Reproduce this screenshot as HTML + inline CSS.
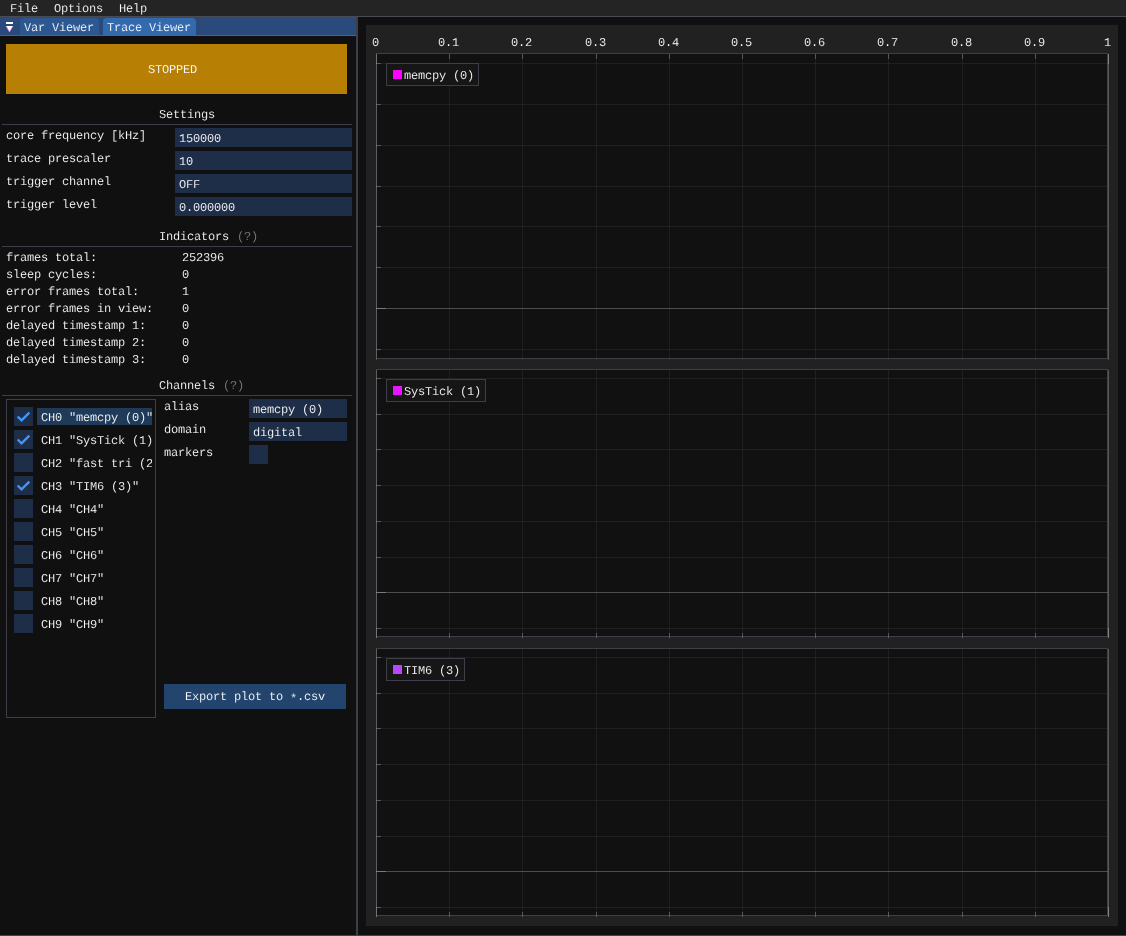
<!DOCTYPE html>
<html><head><meta charset="utf-8"><title>Trace Viewer</title><style>
html,body{margin:0;padding:0;background:#101010;}
body{width:1126px;height:936px;position:relative;overflow:hidden;font-family:"Liberation Mono",monospace;}
#w{position:absolute;left:0;top:0;width:1126px;height:936px;overflow:hidden;will-change:transform;}
.r{position:absolute;}
.t{position:absolute;font-family:"Liberation Mono",monospace;font-size:12px;line-height:13px;letter-spacing:-0.201px;color:#fff;white-space:pre;text-rendering:geometricPrecision;-webkit-text-stroke:0.12px #101010;}
.g{color:#808080;}
</style></head><body>
<div id="w">
<div class="r" style="left:0px;top:0px;width:1126px;height:16px;background:#242424;"></div>
<div class="r" style="left:0px;top:16px;width:1126px;height:1px;background:#4a4a53;"></div>
<div class="t" style="left:10px;top:3px;-webkit-text-stroke-color:#242424;">File</div>
<div class="t" style="left:54px;top:3px;-webkit-text-stroke-color:#242424;">Options</div>
<div class="t" style="left:119px;top:3px;-webkit-text-stroke-color:#242424;">Help</div>
<div class="r" style="left:0px;top:17px;width:356px;height:19px;background:#294a7a;"></div>
<div class="r" style="left:20px;top:18px;width:79px;height:17px;background:#2d5790;border-radius:4px 4px 0 0;"></div>
<div class="r" style="left:103px;top:18px;width:93px;height:17px;background:#3369ad;border-radius:4px 4px 0 0;"></div>
<div class="r" style="left:0px;top:35px;width:356px;height:1px;background:#3369ad;"></div>
<svg class="r" style="left:0;top:17px" width="20" height="18" viewBox="0 17 20 18"><rect x="6" y="22" width="7" height="2" fill="#fff"/><polygon points="5.9,26 13.1,26 9.5,32.2" fill="#fff"/><path d="M6.3 26.6 L9.5 32 L12.7 26.6" fill="none" stroke="#c264e6" stroke-width="0.8" stroke-opacity="0.75"/></svg>
<div class="t" style="left:24px;top:22px;-webkit-text-stroke-color:#2d5790;">Var Viewer</div>
<div class="t" style="left:107px;top:22px;-webkit-text-stroke-color:#3369ad;">Trace Viewer</div>
<div class="r" style="left:356px;top:17px;width:2px;height:918px;background:#3e3e48;"></div>
<div class="r" style="left:0px;top:935px;width:1126px;height:1px;background:#444444;"></div>
<div class="r" style="left:6px;top:44px;width:341px;height:50px;background:#b87f05;"></div>
<div class="t" style="left:148px;top:64px;-webkit-text-stroke-color:#b87f05;">STOPPED</div>
<div class="t" style="left:159px;top:109px;">Settings</div>
<div class="r" style="left:2px;top:124px;width:350px;height:1px;background:#3e3e48;"></div>
<div class="t" style="left:6px;top:130px;">core frequency [kHz]</div>
<div class="r" style="left:175px;top:128px;width:177px;height:19px;background:#1f2e48;"></div>
<div class="t" style="left:179px;top:133px;-webkit-text-stroke-color:#1f2e48;">150000</div>
<div class="t" style="left:6px;top:153px;">trace prescaler</div>
<div class="r" style="left:175px;top:151px;width:177px;height:19px;background:#1f2e48;"></div>
<div class="t" style="left:179px;top:156px;-webkit-text-stroke-color:#1f2e48;">10</div>
<div class="t" style="left:6px;top:176px;">trigger channel</div>
<div class="r" style="left:175px;top:174px;width:177px;height:19px;background:#1f2e48;"></div>
<div class="t" style="left:179px;top:179px;-webkit-text-stroke-color:#1f2e48;">OFF</div>
<div class="t" style="left:6px;top:199px;">trigger level</div>
<div class="r" style="left:175px;top:197px;width:177px;height:19px;background:#1f2e48;"></div>
<div class="t" style="left:179px;top:202px;-webkit-text-stroke-color:#1f2e48;">0.000000</div>
<div class="t" style="left:159px;top:231px;">Indicators</div>
<div class="t g" style="left:237px;top:231px;">(?)</div>
<div class="r" style="left:2px;top:246px;width:350px;height:1px;background:#3e3e48;"></div>
<div class="t" style="left:6px;top:252px;">frames total:</div>
<div class="t" style="left:182px;top:252px;">252396</div>
<div class="t" style="left:6px;top:269px;">sleep cycles:</div>
<div class="t" style="left:182px;top:269px;">0</div>
<div class="t" style="left:6px;top:286px;">error frames total:</div>
<div class="t" style="left:182px;top:286px;">1</div>
<div class="t" style="left:6px;top:303px;">error frames in view:</div>
<div class="t" style="left:182px;top:303px;">0</div>
<div class="t" style="left:6px;top:320px;">delayed timestamp 1:</div>
<div class="t" style="left:182px;top:320px;">0</div>
<div class="t" style="left:6px;top:337px;">delayed timestamp 2:</div>
<div class="t" style="left:182px;top:337px;">0</div>
<div class="t" style="left:6px;top:354px;">delayed timestamp 3:</div>
<div class="t" style="left:182px;top:354px;">0</div>
<div class="t" style="left:159px;top:380px;">Channels</div>
<div class="t g" style="left:223px;top:380px;">(?)</div>
<div class="r" style="left:2px;top:395px;width:350px;height:1px;background:#3e3e48;"></div>
<div class="r" style="left:6px;top:399px;width:148px;height:317px;border:1px solid #3e3e48"></div>
<div class="r" style="left:37px;top:408px;width:115px;height:17px;background:#203a5a;"></div>
<div class="r" style="left:0;top:0;width:152px;height:936px;overflow:hidden">
<div class="t" style="left:41px;top:412px;-webkit-text-stroke-color:#203a5a;">CH0 "memcpy (0)"</div>
<div class="t" style="left:41px;top:435px;">CH1 "SysTick (1)"</div>
<div class="t" style="left:41px;top:458px;">CH2 "fast tri (2)"</div>
<div class="t" style="left:41px;top:481px;">CH3 "TIM6 (3)"</div>
<div class="t" style="left:41px;top:504px;">CH4 "CH4"</div>
<div class="t" style="left:41px;top:527px;">CH5 "CH5"</div>
<div class="t" style="left:41px;top:550px;">CH6 "CH6"</div>
<div class="t" style="left:41px;top:573px;">CH7 "CH7"</div>
<div class="t" style="left:41px;top:596px;">CH8 "CH8"</div>
<div class="t" style="left:41px;top:619px;">CH9 "CH9"</div>
</div>
<div class="r" style="left:14px;top:407px;width:19px;height:19px;background:#1f2e48;"></div>
<svg class="r" style="left:14px;top:407px" width="19" height="19" viewBox="0 0 19 19"><path d="M3.65 9.5 L7.55 13.4 L15.35 5.6" fill="none" stroke="#4296fa" stroke-width="2.35"/></svg>
<div class="r" style="left:14px;top:430px;width:19px;height:19px;background:#1f2e48;"></div>
<svg class="r" style="left:14px;top:430px" width="19" height="19" viewBox="0 0 19 19"><path d="M3.65 9.5 L7.55 13.4 L15.35 5.6" fill="none" stroke="#4296fa" stroke-width="2.35"/></svg>
<div class="r" style="left:14px;top:453px;width:19px;height:19px;background:#1f2e48;"></div>
<div class="r" style="left:14px;top:476px;width:19px;height:19px;background:#1f2e48;"></div>
<svg class="r" style="left:14px;top:476px" width="19" height="19" viewBox="0 0 19 19"><path d="M3.65 9.5 L7.55 13.4 L15.35 5.6" fill="none" stroke="#4296fa" stroke-width="2.35"/></svg>
<div class="r" style="left:14px;top:499px;width:19px;height:19px;background:#1f2e48;"></div>
<div class="r" style="left:14px;top:522px;width:19px;height:19px;background:#1f2e48;"></div>
<div class="r" style="left:14px;top:545px;width:19px;height:19px;background:#1f2e48;"></div>
<div class="r" style="left:14px;top:568px;width:19px;height:19px;background:#1f2e48;"></div>
<div class="r" style="left:14px;top:591px;width:19px;height:19px;background:#1f2e48;"></div>
<div class="r" style="left:14px;top:614px;width:19px;height:19px;background:#1f2e48;"></div>
<div class="t" style="left:164px;top:401px;">alias</div>
<div class="t" style="left:164px;top:424px;">domain</div>
<div class="t" style="left:164px;top:447px;">markers</div>
<div class="r" style="left:249px;top:399px;width:98px;height:19px;background:#1f2e48;"></div>
<div class="t" style="left:253px;top:404px;-webkit-text-stroke-color:#1f2e48;">memcpy (0)</div>
<div class="r" style="left:249px;top:422px;width:98px;height:19px;background:#1f2e48;"></div>
<div class="t" style="left:253px;top:427px;-webkit-text-stroke-color:#1f2e48;">digital</div>
<div class="r" style="left:249px;top:445px;width:19px;height:19px;background:#1f2e48;"></div>
<div class="r" style="left:164px;top:684px;width:182px;height:25px;background:#23456d;"></div>
<div class="t" style="left:185px;top:691px;-webkit-text-stroke-color:#23456d;">Export plot to <span style="position:relative;top:2px">*</span>.csv</div>
<div class="r" style="left:366px;top:25px;width:752px;height:901px;background:#212121;"></div>
<div class="r" style="left:376px;top:53px;width:732px;height:306px;background:#111111;"></div>
<div class="r" style="left:449px;top:54px;width:1px;height:305px;background:rgba(255,255,255,0.0625);"></div>
<div class="r" style="left:449px;top:359px;width:1px;height:1px;background:rgba(255,255,255,0.03);"></div>
<div class="r" style="left:522px;top:54px;width:1px;height:305px;background:rgba(255,255,255,0.0625);"></div>
<div class="r" style="left:522px;top:359px;width:1px;height:1px;background:rgba(255,255,255,0.03);"></div>
<div class="r" style="left:596px;top:54px;width:1px;height:305px;background:rgba(255,255,255,0.0625);"></div>
<div class="r" style="left:596px;top:359px;width:1px;height:1px;background:rgba(255,255,255,0.03);"></div>
<div class="r" style="left:669px;top:54px;width:1px;height:305px;background:rgba(255,255,255,0.0625);"></div>
<div class="r" style="left:669px;top:359px;width:1px;height:1px;background:rgba(255,255,255,0.03);"></div>
<div class="r" style="left:742px;top:54px;width:1px;height:305px;background:rgba(255,255,255,0.0625);"></div>
<div class="r" style="left:742px;top:359px;width:1px;height:1px;background:rgba(255,255,255,0.03);"></div>
<div class="r" style="left:815px;top:54px;width:1px;height:305px;background:rgba(255,255,255,0.0625);"></div>
<div class="r" style="left:815px;top:359px;width:1px;height:1px;background:rgba(255,255,255,0.03);"></div>
<div class="r" style="left:888px;top:54px;width:1px;height:305px;background:rgba(255,255,255,0.0625);"></div>
<div class="r" style="left:888px;top:359px;width:1px;height:1px;background:rgba(255,255,255,0.03);"></div>
<div class="r" style="left:962px;top:54px;width:1px;height:305px;background:rgba(255,255,255,0.0625);"></div>
<div class="r" style="left:962px;top:359px;width:1px;height:1px;background:rgba(255,255,255,0.03);"></div>
<div class="r" style="left:1035px;top:54px;width:1px;height:305px;background:rgba(255,255,255,0.0625);"></div>
<div class="r" style="left:1035px;top:359px;width:1px;height:1px;background:rgba(255,255,255,0.03);"></div>
<div class="r" style="left:376px;top:54px;width:1px;height:305px;background:rgba(255,255,255,0.25);"></div>
<div class="r" style="left:376px;top:359px;width:1px;height:1px;background:rgba(255,255,255,0.22);"></div>
<div class="r" style="left:1108px;top:54px;width:1px;height:305px;background:rgba(255,255,255,0.25);"></div>
<div class="r" style="left:1108px;top:359px;width:1px;height:1px;background:rgba(255,255,255,0.22);"></div>
<div class="r" style="left:376px;top:63px;width:732px;height:1px;background:rgba(255,255,255,0.0625);"></div>
<div class="r" style="left:376px;top:104px;width:732px;height:1px;background:rgba(255,255,255,0.0625);"></div>
<div class="r" style="left:376px;top:145px;width:732px;height:1px;background:rgba(255,255,255,0.0625);"></div>
<div class="r" style="left:376px;top:186px;width:732px;height:1px;background:rgba(255,255,255,0.0625);"></div>
<div class="r" style="left:376px;top:226px;width:732px;height:1px;background:rgba(255,255,255,0.0625);"></div>
<div class="r" style="left:376px;top:267px;width:732px;height:1px;background:rgba(255,255,255,0.0625);"></div>
<div class="r" style="left:376px;top:308px;width:732px;height:1px;background:rgba(255,255,255,0.25);"></div>
<div class="r" style="left:376px;top:349px;width:732px;height:1px;background:rgba(255,255,255,0.0625);"></div>
<div class="r" style="left:376px;top:63px;width:5px;height:1px;background:rgba(255,255,255,0.25);"></div>
<div class="r" style="left:376px;top:104px;width:5px;height:1px;background:rgba(255,255,255,0.25);"></div>
<div class="r" style="left:376px;top:145px;width:5px;height:1px;background:rgba(255,255,255,0.25);"></div>
<div class="r" style="left:376px;top:186px;width:5px;height:1px;background:rgba(255,255,255,0.25);"></div>
<div class="r" style="left:376px;top:226px;width:5px;height:1px;background:rgba(255,255,255,0.25);"></div>
<div class="r" style="left:376px;top:267px;width:5px;height:1px;background:rgba(255,255,255,0.25);"></div>
<div class="r" style="left:376px;top:308px;width:10px;height:1px;background:rgba(255,255,255,0.25);"></div>
<div class="r" style="left:376px;top:349px;width:5px;height:1px;background:rgba(255,255,255,0.25);"></div>
<div class="r" style="left:449px;top:54px;width:1px;height:5px;background:rgba(255,255,255,0.25);"></div>
<div class="r" style="left:522px;top:54px;width:1px;height:5px;background:rgba(255,255,255,0.25);"></div>
<div class="r" style="left:596px;top:54px;width:1px;height:5px;background:rgba(255,255,255,0.25);"></div>
<div class="r" style="left:669px;top:54px;width:1px;height:5px;background:rgba(255,255,255,0.25);"></div>
<div class="r" style="left:742px;top:54px;width:1px;height:5px;background:rgba(255,255,255,0.25);"></div>
<div class="r" style="left:815px;top:54px;width:1px;height:5px;background:rgba(255,255,255,0.25);"></div>
<div class="r" style="left:888px;top:54px;width:1px;height:5px;background:rgba(255,255,255,0.25);"></div>
<div class="r" style="left:962px;top:54px;width:1px;height:5px;background:rgba(255,255,255,0.25);"></div>
<div class="r" style="left:1035px;top:54px;width:1px;height:5px;background:rgba(255,255,255,0.25);"></div>
<div class="r" style="left:376px;top:54px;width:1px;height:10px;background:rgba(255,255,255,0.25);"></div>
<div class="r" style="left:1108px;top:54px;width:1px;height:10px;background:rgba(255,255,255,0.25);"></div>
<div class="r" style="left:376px;top:53px;width:730px;height:304px;border:1px solid rgba(110,110,128,0.5)"></div>
<div class="r" style="left:386px;top:63px;width:91px;height:21px;background:rgba(22,22,22,0.94);border:1px solid #3e3e48"></div>
<div class="r" style="left:393px;top:70px;width:9px;height:9px;background:#ff00ff;"></div>
<div class="t" style="left:404px;top:70px;-webkit-text-stroke-color:#161616;">memcpy (0)</div>
<div class="r" style="left:376px;top:369px;width:732px;height:268px;background:#111111;"></div>
<div class="r" style="left:449px;top:370px;width:1px;height:267px;background:rgba(255,255,255,0.0625);"></div>
<div class="r" style="left:449px;top:637px;width:1px;height:1px;background:rgba(255,255,255,0.03);"></div>
<div class="r" style="left:522px;top:370px;width:1px;height:267px;background:rgba(255,255,255,0.0625);"></div>
<div class="r" style="left:522px;top:637px;width:1px;height:1px;background:rgba(255,255,255,0.03);"></div>
<div class="r" style="left:596px;top:370px;width:1px;height:267px;background:rgba(255,255,255,0.0625);"></div>
<div class="r" style="left:596px;top:637px;width:1px;height:1px;background:rgba(255,255,255,0.03);"></div>
<div class="r" style="left:669px;top:370px;width:1px;height:267px;background:rgba(255,255,255,0.0625);"></div>
<div class="r" style="left:669px;top:637px;width:1px;height:1px;background:rgba(255,255,255,0.03);"></div>
<div class="r" style="left:742px;top:370px;width:1px;height:267px;background:rgba(255,255,255,0.0625);"></div>
<div class="r" style="left:742px;top:637px;width:1px;height:1px;background:rgba(255,255,255,0.03);"></div>
<div class="r" style="left:815px;top:370px;width:1px;height:267px;background:rgba(255,255,255,0.0625);"></div>
<div class="r" style="left:815px;top:637px;width:1px;height:1px;background:rgba(255,255,255,0.03);"></div>
<div class="r" style="left:888px;top:370px;width:1px;height:267px;background:rgba(255,255,255,0.0625);"></div>
<div class="r" style="left:888px;top:637px;width:1px;height:1px;background:rgba(255,255,255,0.03);"></div>
<div class="r" style="left:962px;top:370px;width:1px;height:267px;background:rgba(255,255,255,0.0625);"></div>
<div class="r" style="left:962px;top:637px;width:1px;height:1px;background:rgba(255,255,255,0.03);"></div>
<div class="r" style="left:1035px;top:370px;width:1px;height:267px;background:rgba(255,255,255,0.0625);"></div>
<div class="r" style="left:1035px;top:637px;width:1px;height:1px;background:rgba(255,255,255,0.03);"></div>
<div class="r" style="left:376px;top:370px;width:1px;height:267px;background:rgba(255,255,255,0.25);"></div>
<div class="r" style="left:376px;top:637px;width:1px;height:1px;background:rgba(255,255,255,0.22);"></div>
<div class="r" style="left:1108px;top:370px;width:1px;height:267px;background:rgba(255,255,255,0.25);"></div>
<div class="r" style="left:1108px;top:637px;width:1px;height:1px;background:rgba(255,255,255,0.22);"></div>
<div class="r" style="left:376px;top:378px;width:732px;height:1px;background:rgba(255,255,255,0.0625);"></div>
<div class="r" style="left:376px;top:414px;width:732px;height:1px;background:rgba(255,255,255,0.0625);"></div>
<div class="r" style="left:376px;top:449px;width:732px;height:1px;background:rgba(255,255,255,0.0625);"></div>
<div class="r" style="left:376px;top:485px;width:732px;height:1px;background:rgba(255,255,255,0.0625);"></div>
<div class="r" style="left:376px;top:521px;width:732px;height:1px;background:rgba(255,255,255,0.0625);"></div>
<div class="r" style="left:376px;top:557px;width:732px;height:1px;background:rgba(255,255,255,0.0625);"></div>
<div class="r" style="left:376px;top:592px;width:732px;height:1px;background:rgba(255,255,255,0.25);"></div>
<div class="r" style="left:376px;top:628px;width:732px;height:1px;background:rgba(255,255,255,0.0625);"></div>
<div class="r" style="left:376px;top:378px;width:5px;height:1px;background:rgba(255,255,255,0.25);"></div>
<div class="r" style="left:376px;top:414px;width:5px;height:1px;background:rgba(255,255,255,0.25);"></div>
<div class="r" style="left:376px;top:449px;width:5px;height:1px;background:rgba(255,255,255,0.25);"></div>
<div class="r" style="left:376px;top:485px;width:5px;height:1px;background:rgba(255,255,255,0.25);"></div>
<div class="r" style="left:376px;top:521px;width:5px;height:1px;background:rgba(255,255,255,0.25);"></div>
<div class="r" style="left:376px;top:557px;width:5px;height:1px;background:rgba(255,255,255,0.25);"></div>
<div class="r" style="left:376px;top:592px;width:10px;height:1px;background:rgba(255,255,255,0.25);"></div>
<div class="r" style="left:376px;top:628px;width:5px;height:1px;background:rgba(255,255,255,0.25);"></div>
<div class="r" style="left:449px;top:633px;width:1px;height:5px;background:rgba(255,255,255,0.25);"></div>
<div class="r" style="left:522px;top:633px;width:1px;height:5px;background:rgba(255,255,255,0.25);"></div>
<div class="r" style="left:596px;top:633px;width:1px;height:5px;background:rgba(255,255,255,0.25);"></div>
<div class="r" style="left:669px;top:633px;width:1px;height:5px;background:rgba(255,255,255,0.25);"></div>
<div class="r" style="left:742px;top:633px;width:1px;height:5px;background:rgba(255,255,255,0.25);"></div>
<div class="r" style="left:815px;top:633px;width:1px;height:5px;background:rgba(255,255,255,0.25);"></div>
<div class="r" style="left:888px;top:633px;width:1px;height:5px;background:rgba(255,255,255,0.25);"></div>
<div class="r" style="left:962px;top:633px;width:1px;height:5px;background:rgba(255,255,255,0.25);"></div>
<div class="r" style="left:1035px;top:633px;width:1px;height:5px;background:rgba(255,255,255,0.25);"></div>
<div class="r" style="left:376px;top:628px;width:1px;height:10px;background:rgba(255,255,255,0.25);"></div>
<div class="r" style="left:1108px;top:628px;width:1px;height:10px;background:rgba(255,255,255,0.25);"></div>
<div class="r" style="left:376px;top:369px;width:730px;height:266px;border:1px solid rgba(110,110,128,0.5)"></div>
<div class="r" style="left:386px;top:379px;width:98px;height:21px;background:rgba(22,22,22,0.94);border:1px solid #3e3e48"></div>
<div class="r" style="left:393px;top:386px;width:9px;height:9px;background:#e816ff;"></div>
<div class="t" style="left:404px;top:386px;-webkit-text-stroke-color:#161616;">SysTick (1)</div>
<div class="r" style="left:376px;top:648px;width:732px;height:268px;background:#111111;"></div>
<div class="r" style="left:449px;top:649px;width:1px;height:267px;background:rgba(255,255,255,0.0625);"></div>
<div class="r" style="left:449px;top:916px;width:1px;height:1px;background:rgba(255,255,255,0.03);"></div>
<div class="r" style="left:522px;top:649px;width:1px;height:267px;background:rgba(255,255,255,0.0625);"></div>
<div class="r" style="left:522px;top:916px;width:1px;height:1px;background:rgba(255,255,255,0.03);"></div>
<div class="r" style="left:596px;top:649px;width:1px;height:267px;background:rgba(255,255,255,0.0625);"></div>
<div class="r" style="left:596px;top:916px;width:1px;height:1px;background:rgba(255,255,255,0.03);"></div>
<div class="r" style="left:669px;top:649px;width:1px;height:267px;background:rgba(255,255,255,0.0625);"></div>
<div class="r" style="left:669px;top:916px;width:1px;height:1px;background:rgba(255,255,255,0.03);"></div>
<div class="r" style="left:742px;top:649px;width:1px;height:267px;background:rgba(255,255,255,0.0625);"></div>
<div class="r" style="left:742px;top:916px;width:1px;height:1px;background:rgba(255,255,255,0.03);"></div>
<div class="r" style="left:815px;top:649px;width:1px;height:267px;background:rgba(255,255,255,0.0625);"></div>
<div class="r" style="left:815px;top:916px;width:1px;height:1px;background:rgba(255,255,255,0.03);"></div>
<div class="r" style="left:888px;top:649px;width:1px;height:267px;background:rgba(255,255,255,0.0625);"></div>
<div class="r" style="left:888px;top:916px;width:1px;height:1px;background:rgba(255,255,255,0.03);"></div>
<div class="r" style="left:962px;top:649px;width:1px;height:267px;background:rgba(255,255,255,0.0625);"></div>
<div class="r" style="left:962px;top:916px;width:1px;height:1px;background:rgba(255,255,255,0.03);"></div>
<div class="r" style="left:1035px;top:649px;width:1px;height:267px;background:rgba(255,255,255,0.0625);"></div>
<div class="r" style="left:1035px;top:916px;width:1px;height:1px;background:rgba(255,255,255,0.03);"></div>
<div class="r" style="left:376px;top:649px;width:1px;height:267px;background:rgba(255,255,255,0.25);"></div>
<div class="r" style="left:376px;top:916px;width:1px;height:1px;background:rgba(255,255,255,0.22);"></div>
<div class="r" style="left:1108px;top:649px;width:1px;height:267px;background:rgba(255,255,255,0.25);"></div>
<div class="r" style="left:1108px;top:916px;width:1px;height:1px;background:rgba(255,255,255,0.22);"></div>
<div class="r" style="left:376px;top:657px;width:732px;height:1px;background:rgba(255,255,255,0.0625);"></div>
<div class="r" style="left:376px;top:693px;width:732px;height:1px;background:rgba(255,255,255,0.0625);"></div>
<div class="r" style="left:376px;top:728px;width:732px;height:1px;background:rgba(255,255,255,0.0625);"></div>
<div class="r" style="left:376px;top:764px;width:732px;height:1px;background:rgba(255,255,255,0.0625);"></div>
<div class="r" style="left:376px;top:800px;width:732px;height:1px;background:rgba(255,255,255,0.0625);"></div>
<div class="r" style="left:376px;top:836px;width:732px;height:1px;background:rgba(255,255,255,0.0625);"></div>
<div class="r" style="left:376px;top:871px;width:732px;height:1px;background:rgba(255,255,255,0.25);"></div>
<div class="r" style="left:376px;top:907px;width:732px;height:1px;background:rgba(255,255,255,0.0625);"></div>
<div class="r" style="left:376px;top:657px;width:5px;height:1px;background:rgba(255,255,255,0.25);"></div>
<div class="r" style="left:376px;top:693px;width:5px;height:1px;background:rgba(255,255,255,0.25);"></div>
<div class="r" style="left:376px;top:728px;width:5px;height:1px;background:rgba(255,255,255,0.25);"></div>
<div class="r" style="left:376px;top:764px;width:5px;height:1px;background:rgba(255,255,255,0.25);"></div>
<div class="r" style="left:376px;top:800px;width:5px;height:1px;background:rgba(255,255,255,0.25);"></div>
<div class="r" style="left:376px;top:836px;width:5px;height:1px;background:rgba(255,255,255,0.25);"></div>
<div class="r" style="left:376px;top:871px;width:10px;height:1px;background:rgba(255,255,255,0.25);"></div>
<div class="r" style="left:376px;top:907px;width:5px;height:1px;background:rgba(255,255,255,0.25);"></div>
<div class="r" style="left:449px;top:912px;width:1px;height:5px;background:rgba(255,255,255,0.25);"></div>
<div class="r" style="left:522px;top:912px;width:1px;height:5px;background:rgba(255,255,255,0.25);"></div>
<div class="r" style="left:596px;top:912px;width:1px;height:5px;background:rgba(255,255,255,0.25);"></div>
<div class="r" style="left:669px;top:912px;width:1px;height:5px;background:rgba(255,255,255,0.25);"></div>
<div class="r" style="left:742px;top:912px;width:1px;height:5px;background:rgba(255,255,255,0.25);"></div>
<div class="r" style="left:815px;top:912px;width:1px;height:5px;background:rgba(255,255,255,0.25);"></div>
<div class="r" style="left:888px;top:912px;width:1px;height:5px;background:rgba(255,255,255,0.25);"></div>
<div class="r" style="left:962px;top:912px;width:1px;height:5px;background:rgba(255,255,255,0.25);"></div>
<div class="r" style="left:1035px;top:912px;width:1px;height:5px;background:rgba(255,255,255,0.25);"></div>
<div class="r" style="left:376px;top:907px;width:1px;height:10px;background:rgba(255,255,255,0.25);"></div>
<div class="r" style="left:1108px;top:907px;width:1px;height:10px;background:rgba(255,255,255,0.25);"></div>
<div class="r" style="left:376px;top:648px;width:730px;height:266px;border:1px solid rgba(110,110,128,0.5)"></div>
<div class="r" style="left:386px;top:658px;width:77px;height:21px;background:rgba(22,22,22,0.94);border:1px solid #3e3e48"></div>
<div class="r" style="left:393px;top:665px;width:9px;height:9px;background:#b548ff;"></div>
<div class="t" style="left:404px;top:665px;-webkit-text-stroke-color:#161616;">TIM6 (3)</div>
<div class="t" style="left:372px;top:37px;-webkit-text-stroke-color:#212121;">0</div>
<div class="t" style="left:438px;top:37px;-webkit-text-stroke-color:#212121;">0.1</div>
<div class="t" style="left:511px;top:37px;-webkit-text-stroke-color:#212121;">0.2</div>
<div class="t" style="left:585px;top:37px;-webkit-text-stroke-color:#212121;">0.3</div>
<div class="t" style="left:658px;top:37px;-webkit-text-stroke-color:#212121;">0.4</div>
<div class="t" style="left:731px;top:37px;-webkit-text-stroke-color:#212121;">0.5</div>
<div class="t" style="left:804px;top:37px;-webkit-text-stroke-color:#212121;">0.6</div>
<div class="t" style="left:877px;top:37px;-webkit-text-stroke-color:#212121;">0.7</div>
<div class="t" style="left:951px;top:37px;-webkit-text-stroke-color:#212121;">0.8</div>
<div class="t" style="left:1024px;top:37px;-webkit-text-stroke-color:#212121;">0.9</div>
<div class="t" style="left:1104px;top:37px;-webkit-text-stroke-color:#212121;">1</div>
</div>
</body></html>
